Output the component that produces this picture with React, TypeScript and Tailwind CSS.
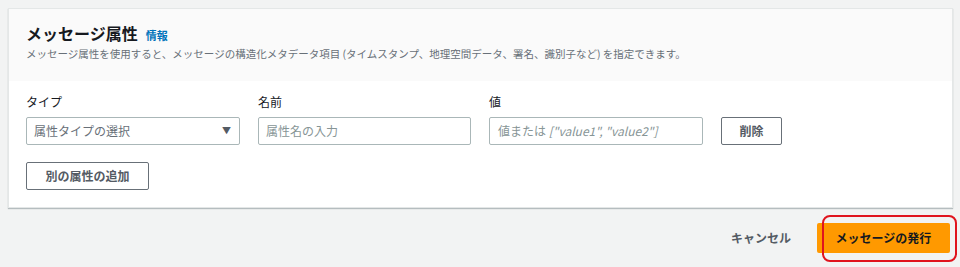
import React from 'react';

const font = { fontFamily: '"Noto Sans CJK JP", "Noto Sans", sans-serif' };

function Field({ label, children }: { label: string; children: React.ReactNode }) {
  return (
    <div className="flex flex-col">
      <span className="text-[12px] leading-4 text-[#16191f]">{label}</span>
      <div className="mt-[7px]">{children}</div>
    </div>
  );
}

export default function App() {
  return (
    <div className="w-[960px] h-[267px] bg-[#f2f3f3] pt-2 overflow-hidden" style={font}>
      <div className="ml-2 w-[945px] bg-white border border-[#e4e7e7] shadow-[0_1px_1px_rgba(0,28,36,0.25)]">
        <div className="bg-[#fafafa] h-[72px] px-[17px] pt-[14px]">
          <div className="flex items-baseline gap-2">
            <h2 className="text-[16px] leading-5 font-bold text-[#16191f]">メッセージ属性</h2>
            <a className="text-[11px] text-[#0073bb] font-bold">情報</a>
          </div>
          <p className="mt-[2px] text-[10.5px] leading-4 text-[#687078]">
            メッセージ属性を使用すると、メッセージの構造化メタデータ項目 (タイムスタンプ、地理空間データ、署名、識別子など) を指定できます。
          </p>
        </div>
        <div className="px-[17px] pt-[13px] pb-[17px]">
          <div className="flex items-end gap-[18px]">
            <Field label="タイプ">
              <div className="w-[214px] h-[28px] border border-[#aab7b8] rounded-[2px] flex items-center justify-between pl-[7px] pr-[8px]">
                <span className="text-[12px] text-[#687078]">属性タイプの選択</span>
                <span className="text-[9px] text-[#545b64]">▼</span>
              </div>
            </Field>
            <Field label="名前">
              <div className="w-[213px] h-[28px] border border-[#aab7b8] rounded-[2px] flex items-center pl-[7px]">
                <span className="text-[12px] text-[#879596]">属性名の入力</span>
              </div>
            </Field>
            <Field label="値">
              <div className="w-[214px] h-[28px] border border-[#aab7b8] rounded-[2px] flex items-center pl-[8px]">
                <span className="text-[12px] text-[#879596]">
                  値または <i>["value1", "value2"]</i>
                </span>
              </div>
            </Field>
            <button className="w-[61px] h-[28px] border border-[#687078] rounded-[2px] bg-white text-[12px] font-bold text-[#545b64]">
              削除
            </button>
          </div>
          <button className="mt-[17px] w-[123px] h-[28px] border border-[#687078] rounded-[2px] bg-white text-[12px] font-bold text-[#545b64]">
            別の属性の追加
          </button>
        </div>
      </div>
      <div className="flex justify-end items-center mt-[15px] pr-[10px]">
        <button className="text-[12px] font-bold text-[#545b64] mr-[26px]">キャンセル</button>
        <div className="relative">
          <button className="w-[133px] h-[30px] bg-[#ff9900] rounded-[2px] text-[12px] font-bold text-[#16191f]">
            メッセージの発行
          </button>
          <div className="absolute left-[5px] -top-[8px] -right-[7px] -bottom-[9px] border-2 border-[#e0141e] rounded-[8px] pointer-events-none" />
        </div>
      </div>
    </div>
  );
}
